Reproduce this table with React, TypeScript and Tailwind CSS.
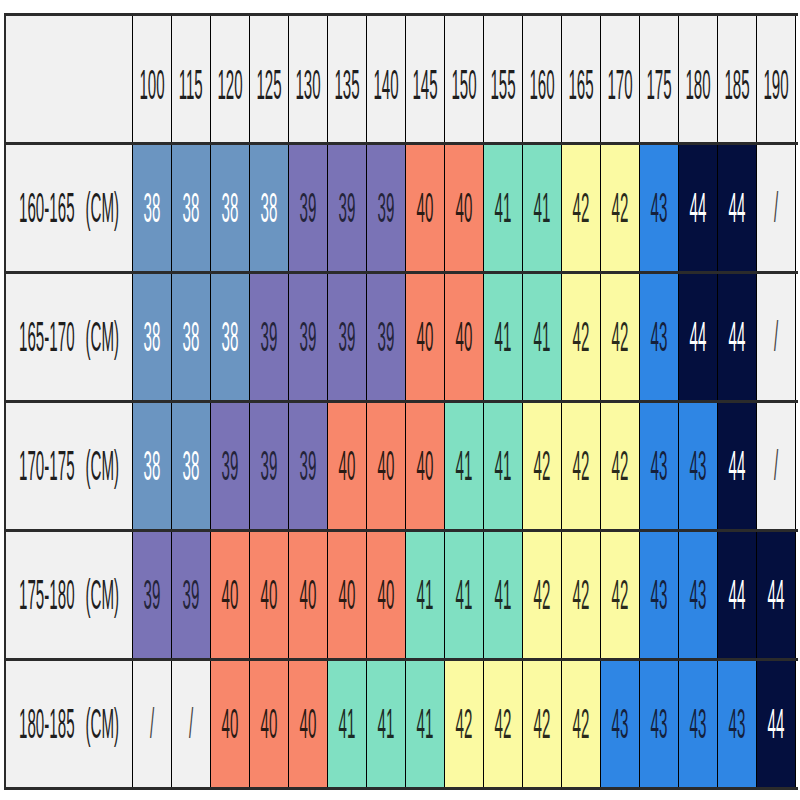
import React from "react";

const heights = ["100", "115", "120", "125", "130", "135", "140", "145", "150", "155", "160", "165", "170", "175", "180", "185", "190"];

const rows: { label: string; sizes: string[] }[] = [
  { label: "160-165", sizes: ["38", "38", "38", "38", "39", "39", "39", "40", "40", "41", "41", "42", "42", "43", "44", "44", "/"] },
  { label: "165-170", sizes: ["38", "38", "38", "39", "39", "39", "39", "40", "40", "41", "41", "42", "42", "43", "44", "44", "/"] },
  { label: "170-175", sizes: ["38", "38", "39", "39", "39", "40", "40", "40", "41", "41", "42", "42", "42", "43", "43", "44", "/"] },
  { label: "175-180", sizes: ["39", "39", "40", "40", "40", "40", "40", "41", "41", "41", "42", "42", "42", "43", "43", "44", "44"] },
  { label: "180-185", sizes: ["/", "/", "40", "40", "40", "41", "41", "41", "42", "42", "42", "42", "43", "43", "43", "43", "44"] },
];

const sizeStyle: Record<string, string> = {
  "38": "bg-[#6b95c1] text-white",
  "39": "bg-[#7a73b6] text-[#24243a]",
  "40": "bg-[#f8876b] text-[#2a1a14]",
  "41": "bg-[#80e0c2] text-[#1c2a24]",
  "42": "bg-[#fbfaa2] text-[#2a2a1c]",
  "43": "bg-[#2f86e4] text-[#14203c]",
  "44": "bg-[#040f3e] text-white",
  "/": "bg-[#f1f1f1] text-[#444]",
};

// the chart's lettering is tall and squeezed, so stretch a plain sans
const Txt = ({ children }: { children: React.ReactNode }) => (
  <span className="inline-block scale-x-[0.42] scale-y-[1.2] whitespace-nowrap text-[36px] leading-none [font-family:'Liberation_Sans',sans-serif]">
    {children}
  </span>
);

export default function App() {
  return (
    <div className="w-[800px] h-[800px] bg-white pt-[13px] pl-[4px]">
      <div className="w-[794px] border-t-[3px] border-l-[2px] border-[#2b2b2b]">
        {/* header */}
        <div className="flex h-[129px] border-b-[3px] border-[#2b2b2b]">
          <div className="w-[127px] shrink-0 bg-[#f1f1f1] border-r border-black" />
          {heights.map(h => (
            <div key={h} className="w-[39px] shrink-0 bg-[#f1f1f1] border-r border-black flex items-center justify-center pt-3 text-[#1e1e1e]">
              <Txt>{h}</Txt>
            </div>
          ))}
        </div>
        {rows.map(r => (
          <div key={r.label} className="flex h-[129px] border-b-[3px] border-[#2b2b2b]">
            <div className="w-[127px] shrink-0 bg-[#f1f1f1] border-r border-black flex items-center justify-center text-[#1e1e1e]">
              <Txt>
                {r.label}
                <span className="ml-[26px]">(CM)</span>
              </Txt>
            </div>
            {r.sizes.map((s, i) => (
              <div key={i} className={`w-[39px] shrink-0 border-r border-black flex items-center justify-center ${sizeStyle[s]}`}>
                <Txt>{s}</Txt>
              </div>
            ))}
          </div>
        ))}
      </div>
    </div>
  );
}
